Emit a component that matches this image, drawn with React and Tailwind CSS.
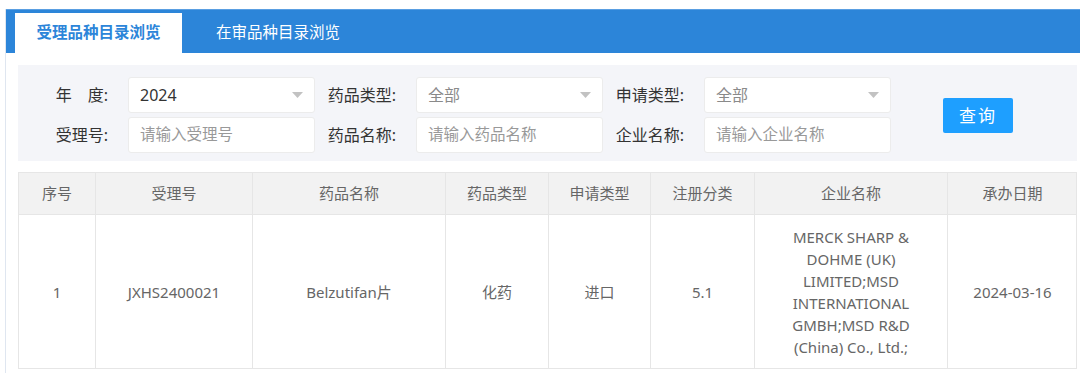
import { Fragment } from 'react';

const FONT = '"Noto Sans", "Noto Sans CJK SC", sans-serif';

const columns = [
    { title: '序号', w: 'w-[77px]' },
    { title: '受理号', w: 'w-[157px]' },
    { title: '药品名称', w: 'w-[193px]' },
    { title: '药品类型', w: 'w-[103px]' },
    { title: '申请类型', w: 'w-[102px]' },
    { title: '注册分类', w: 'w-[104px]' },
    { title: '企业名称', w: 'w-[193px]' },
    { title: '承办日期', w: 'w-[129px]' },
];

const row = [
    '1',
    'JXHS2400021',
    'Belzutifan片',
    '化药',
    '进口',
    '5.1',
    'MERCK SHARP & DOHME (UK) LIMITED;MSD INTERNATIONAL GMBH;MSD R&D (China) Co., Ltd.;',
    '2024-03-16',
];

const Caret = () => (
    <svg width="11" height="6" viewBox="0 0 11 6" className="shrink-0">
        <path d="M0 0 L11 0 L5.5 6 Z" fill="#c2c2c2" />
    </svg>
);

const SelectBox = ({ value, muted }) => (
    <div className="w-[187px] h-[36px] bg-white border border-[#ececec] rounded-[3px] flex items-center justify-between pl-[11px] pr-[11px] text-[16px]">
        <span className={muted ? 'text-[#8a8a8a]' : 'text-[#333]'}>{value}</span>
        <Caret />
    </div>
);

const InputBox = ({ placeholder }) => (
    <div className="w-[187px] h-[36px] bg-white border border-[#ececec] rounded-[3px] flex items-center pl-[11px] text-[15.5px]">
        <span className="text-[#999]">{placeholder}</span>
    </div>
);

const Label = ({ children, w }) => (
    <div className={`${w} text-right pr-[20px] text-[#333] text-[16px] shrink-0`}>{children}</div>
);

export default function App() {
    return (
        <div className="w-[1080px] h-[373px] overflow-hidden bg-white pt-[9px] pl-[5px]" style={{ fontFamily: FONT }}>
            <div className="border-l border-[#dfe6f0] h-full text-[15px]">
                {/* Tab bar */}
                <div className="h-[44px] bg-[#2c85d9] border-t border-[#5a9fe2] flex items-end pl-[9px]">
                    <div className="h-[40px] w-[167px] bg-white flex items-center justify-center text-[#2c85d9] font-bold text-[15.5px]">
                        受理品种目录浏览
                    </div>
                    <div className="h-[40px] px-[34px] flex items-center text-white text-[15.5px]">
                        在审品种目录浏览
                    </div>
                </div>

                {/* Search form */}
                <div className="ml-[12px] mr-[3px] mt-[12px] h-[96px] bg-[#f4f5f9] flex items-start pt-[12px]">
                    <div className="flex flex-col gap-[4px]">
                        <div className="flex items-center">
                            <Label w="w-[110px]">年　度:</Label>
                            <SelectBox value="2024" />
                            <Label w="w-[101px]">药品类型:</Label>
                            <SelectBox value="全部" muted />
                            <Label w="w-[101px]">申请类型:</Label>
                            <SelectBox value="全部" muted />
                        </div>
                        <div className="flex items-center">
                            <Label w="w-[110px]">受理号:</Label>
                            <InputBox placeholder="请输入受理号" />
                            <Label w="w-[101px]">药品名称:</Label>
                            <InputBox placeholder="请输入药品名称" />
                            <Label w="w-[101px]">企业名称:</Label>
                            <InputBox placeholder="请输入企业名称" />
                        </div>
                    </div>
                    <button className="ml-[52px] mt-[21px] w-[70px] h-[35px] bg-[#1e9fff] rounded-[2px] text-white text-[17px] tracking-[2px] flex items-center justify-center">
                        查询
                    </button>
                </div>

                {/* Result table */}
                <div className="ml-[12px] mt-[11px] w-[1059px] border border-[#e6e6e6] text-[#666]">
                    <div className="flex h-[42px] bg-[#f2f2f2] border-b border-[#e6e6e6]">
                        {columns.map((c, i) => (
                            <div
                                key={c.title}
                                className={`${c.w} shrink-0 flex items-center justify-center ${i < columns.length - 1 ? 'border-r border-[#e6e6e6]' : ''}`}
                            >
                                {c.title}
                            </div>
                        ))}
                    </div>
                    <div className="flex h-[153px]">
                        {row.map((v, i) => (
                            <Fragment key={i}>
                                <div
                                    className={`${columns[i].w} shrink-0 flex items-center justify-center text-center px-[15px] leading-[22px] break-words ${i < columns.length - 1 ? 'border-r border-[#e6e6e6]' : ''}`}
                                >
                                    {v}
                                </div>
                            </Fragment>
                        ))}
                    </div>
                </div>
            </div>
        </div>
    );
}
